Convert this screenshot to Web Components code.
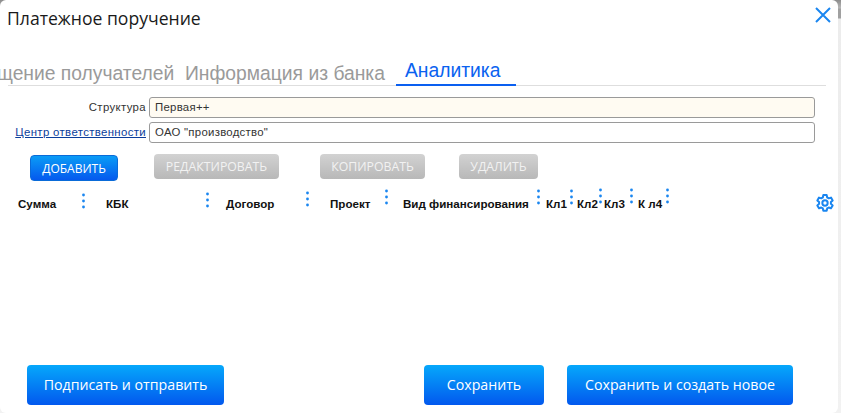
<!DOCTYPE html>
<html>
<head>
<meta charset="utf-8">
<style>
html, body { margin: 0; height: 100%; background: linear-gradient(#8c8c8c 0, #b8b8b8 8px, #a0a0a0 9px, #a0a0a0 18px, #ececec 19px, #f2f2f2 100%); }
</style>
</head>
<body>
<template id="t-dialog">
  <style>
    :host { display: flex; flex-direction: column; width: 838px; height: 413px; background: #fff; border-radius: 6px; font-family: "Liberation Sans", Arial, sans-serif; overflow: hidden; }
    .top { display: flex; justify-content: space-between; height: 56px; padding: 7px 6px 0 7px; box-sizing: border-box; }
    .close { width: 18px; height: 18px; margin-top: -1px; }
    .fields { display: flex; flex-direction: column; gap: 4px; padding: 11px 23px 0 0; }
    .actions { display: flex; padding: 12px 0 0 30px; height: 26px; }
    .bottom { display: flex; padding: 0 0 0 27px; margin-top: auto; margin-bottom: 8px; }
  </style>
  <div class="top">
    <slot name="title"></slot>
    <svg class="close" viewBox="0 0 18 18"><path d="M2 2L16 16M16 2L2 16" stroke="#1a86f0" stroke-width="2" fill="none"/></svg>
  </div>
  <slot name="tabs"></slot>
  <div class="fields"><slot name="fields"></slot></div>
  <div class="actions"><slot name="actions"></slot></div>
  <slot name="grid"></slot>
  <div class="bottom"><slot name="bottom"></slot></div>
</template>

<template id="t-tabs">
  <style>
    :host { display: flex; align-items: flex-end; height: 30px; margin-right: 12px; font: 19.3px/22px "Liberation Sans", Arial, sans-serif; color: #9a9a9a; overflow: hidden; position: relative; }
    .line { position: absolute; left: 8px; right: 0; bottom: 0; height: 1px; background: #dedede; }
  </style>
  <div class="line"></div>
  <slot></slot>
</template>

<template id="t-tab">
  <style>
    :host { display: block; flex: none; height: 30px; box-sizing: border-box; position: relative; padding-top: 7px; white-space: nowrap; }
    :host([active]) { color: #0a62f0; border-bottom: 2px solid #0a5ff0; padding-top: 4px; }
    span { display: block; }
  </style>
  <span><slot></slot></span>
</template>

<template id="t-field">
  <style>
    :host { display: flex; align-items: center; height: 21px; color: #333; font-family: "Liberation Sans", sans-serif; font-size: 11.4px; }
    .lab { flex: 0 0 146px; text-align: right; box-sizing: border-box; white-space: nowrap; letter-spacing: 0.35px; line-height: 14px; padding-bottom: 1px; }
    :host([link]) .lab { color: #0b3d9b; text-decoration: underline; }
    .box { flex: 1; height: 21px; margin-left: 3px; box-sizing: border-box; border: 1px solid #9a9a9a; border-radius: 3px; padding: 3px 5px; background: #fff; letter-spacing: 0.27px; line-height: 13px; }
    :host([hl]) .box { background: #fffbf2; }
  </style>
  <div class="lab"><slot name="label"></slot></div>
  <div class="box"><slot></slot></div>
</template>

<template id="t-btn">
  <style>
    :host { display: block; box-sizing: border-box; flex: none; text-align: center; white-space: nowrap; }
    :host([kind=small]) { height: 26px; border-radius: 4px; font: 12px/25px "Open Sans", sans-serif; color: #fff; background: linear-gradient(#0a9cf6, #0559ee); border: 1px solid #0a6bd8; }
    :host([kind=off]) { height: 25px; margin-top: -1px; border-radius: 4px; font: 12.3px/25px "Open Sans", sans-serif; color: #f2f2f2; background: linear-gradient(#d2d2d2, #b8b8b8); }
    :host([kind=big]) { height: 40px; border-radius: 4px; font: 14.2px/40px "Open Sans", sans-serif; color: #fff; background: linear-gradient(#06a8fb, #0258ee); }
  </style>
  <slot></slot>
</template>

<template id="t-col">
  <style>
    :host { display: flex; flex: none; height: 30px; font: bold 11.6px/14px "Liberation Sans", Arial, sans-serif; color: #111; }
    .lab { flex: none; padding-top: 8px; white-space: nowrap; box-sizing: border-box; }
    svg { flex: none; width: 3px; height: 16px; }
  </style>
  <div class="lab"><slot></slot></div>
  <svg viewBox="0 0 3 16"><circle cx="1.5" cy="2" r="1.4" fill="#1a86f0"/><circle cx="1.5" cy="8" r="1.4" fill="#1a86f0"/><circle cx="1.5" cy="14" r="1.4" fill="#1a86f0"/></svg>
</template>

<template id="t-grid">
  <style>
    :host { display: flex; height: 30px; padding: 8px 3px 0 18px; }
    .gear { width: 20px; height: 20px; margin: 4px 0 0 auto; flex: none; }
  </style>
  <slot></slot>
  <svg class="gear" viewBox="0 0 24 24" fill="none" stroke="#1a86f0" stroke-width="2.4" stroke-linejoin="round"><circle cx="12" cy="12" r="3.2"/><path d="M10 2.5h4l.6 2.8 1.9 1.1 2.7-.9 2 3.4-2.1 1.9v2.2l2.1 1.9-2 3.4-2.7-.9-1.9 1.1-.6 2.8h-4l-.6-2.8-1.9-1.1-2.7.9-2-3.4 2.1-1.9v-2.2L2.8 8.9l2-3.4 2.7.9 1.9-1.1z"/></svg>
</template>

<pp-dialog>
  <div slot="title" style="font:17.6px/22px 'Open Sans',sans-serif;color:#1a1a1a">Платежное поручение</div>
  <pp-tabs slot="tabs">
    <pp-tab style="margin-left:-3px;width:188px">щение получателей</pp-tab>
    <pp-tab style="width:211px">Информация из банка</pp-tab>
    <pp-tab active style="width:120px;padding-left:9px">Аналитика</pp-tab>
  </pp-tabs>
  <pp-field slot="fields" hl><span slot="label">Структура</span>Первая++</pp-field>
  <pp-field slot="fields" link><span slot="label">Центр ответственности</span>ОАО "производство"</pp-field>
  <pp-btn slot="actions" kind="small" style="width:88px">ДОБАВИТЬ</pp-btn>
  <pp-btn slot="actions" kind="off" style="width:125px;margin-left:36px">РЕДАКТИРОВАТЬ</pp-btn>
  <pp-btn slot="actions" kind="off" style="width:105px;margin-left:41px">КОПИРОВАТЬ</pp-btn>
  <pp-btn slot="actions" kind="off" style="width:79px;margin-left:34px">УДАЛИТЬ</pp-btn>
  <pp-grid slot="grid">
    <pp-col w="88" d="63.5" o="4">Сумма</pp-col>
    <pp-col w="120" d="99.5" o="3">КБК</pp-col>
    <pp-col w="104" d="79.5" o="2">Договор</pp-col>
    <pp-col w="73" d="54.5" o="0">Проект</pp-col>
    <pp-col w="143" d="133.5" o="0">Вид финансирования</pp-col>
    <pp-col w="31" d="23.5" o="0">Кл1</pp-col>
    <pp-col w="27" d="21.5" o="-1">Кл2</pp-col>
    <pp-col w="34" d="25.5" o="-1">Кл3</pp-col>
    <pp-col w="40" d="27.5" o="-1">К л4</pp-col>
  </pp-grid>
  <pp-btn slot="bottom" kind="big" style="width:197px">Подписать и отправить</pp-btn>
  <pp-btn slot="bottom" kind="big" style="width:120px;margin-left:200px">Сохранить</pp-btn>
  <pp-btn slot="bottom" kind="big" style="width:226px;margin-left:23px">Сохранить и создать новое</pp-btn>
</pp-dialog>

<script>
class Base extends HTMLElement {
    constructor(id) {
        super();
        let root = this.attachShadow({ mode: 'open' });
        root.appendChild(document.getElementById(id).content.cloneNode(true));
    }
}
customElements.define('pp-dialog', class extends Base { constructor() { super('t-dialog'); } });
customElements.define('pp-tabs', class extends Base { constructor() { super('t-tabs'); } });
customElements.define('pp-tab', class extends Base { constructor() { super('t-tab'); } });
customElements.define('pp-field', class extends Base { constructor() { super('t-field'); } });
customElements.define('pp-btn', class extends Base { constructor() { super('t-btn'); } });
customElements.define('pp-grid', class extends Base { constructor() { super('t-grid'); } });
customElements.define('pp-col', class extends Base {
    constructor() { super('t-col'); }
    connectedCallback() {
        // column width and where the resize dots sit
        this.style.width = this.getAttribute('w') + 'px';
        this.shadowRoot.querySelector('.lab').style.width = this.getAttribute('d') + 'px';
        this.shadowRoot.querySelector('svg').style.marginTop = this.getAttribute('o') + 'px';
    }
});
</script>
</body>
</html>
